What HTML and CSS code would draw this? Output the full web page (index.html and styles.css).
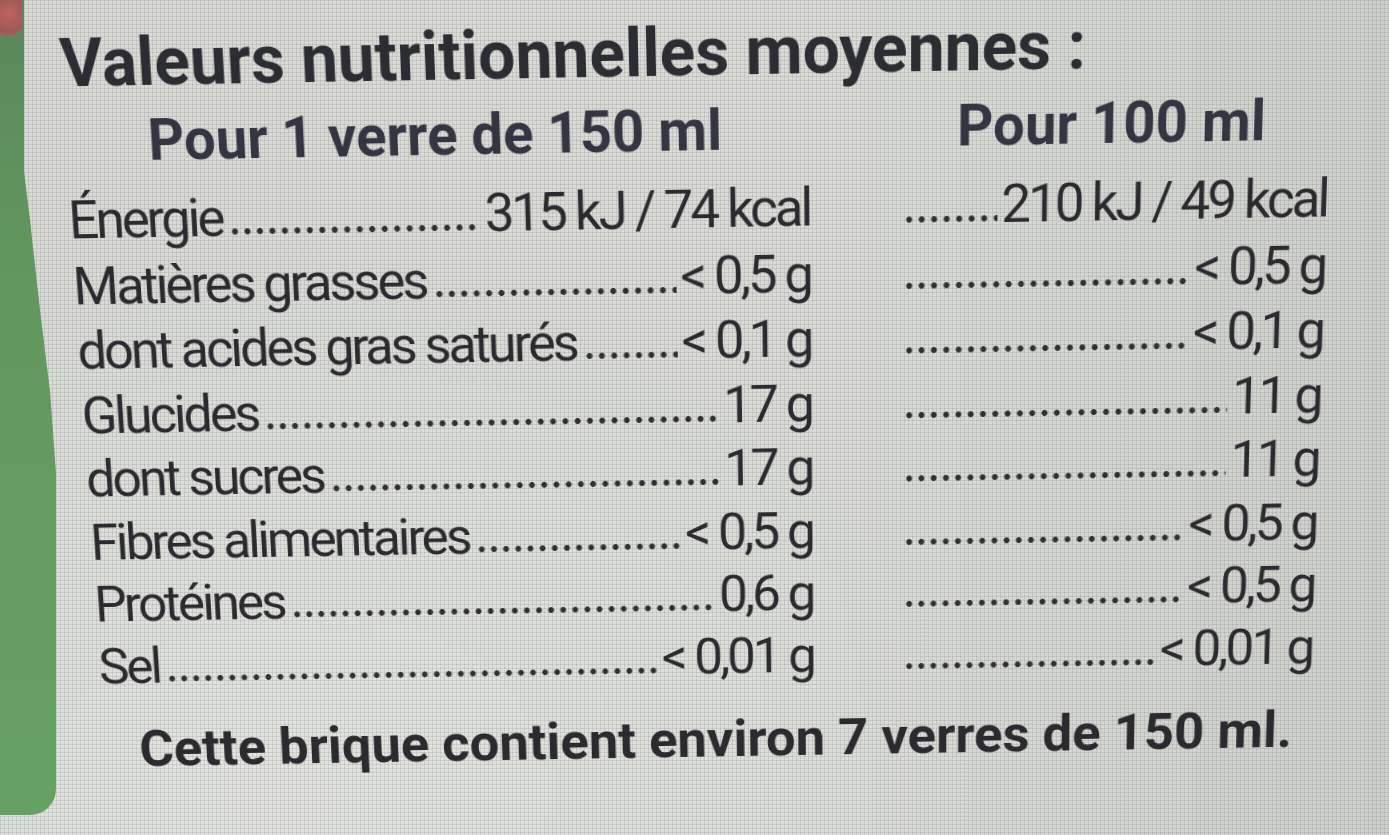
FILE: index.html
```html
<!DOCTYPE html>
<html lang="fr">
<head>
<meta charset="utf-8">
<title>Valeurs nutritionnelles moyennes</title>
<link rel="stylesheet" href="styles.css">
</head>
<body>
<div class="page">
  <div class="strip"><span class="blot"></span></div>
  <div class="label">
    <h1 class="title">Valeurs nutritionnelles moyennes :</h1>
    <div class="heads">
      <div class="head head-a">Pour 1 verre de 150 ml</div>
      <div class="head head-b">Pour 100 ml</div>
    </div>
    <div class="rows">
      <div class="row">
        <div class="cell"><span class="name">Énergie</span><span class="dots"></span><span class="val">315 kJ / 74 kcal</span></div>
        <div class="cell"><span class="dots"></span><span class="val">210 kJ / 49 kcal</span></div>
      </div>
      <div class="row">
        <div class="cell"><span class="name">Matières grasses</span><span class="dots"></span><span class="val">&lt; 0,5 g</span></div>
        <div class="cell"><span class="dots"></span><span class="val">&lt; 0,5 g</span></div>
      </div>
      <div class="row">
        <div class="cell"><span class="name">dont acides gras saturés</span><span class="dots"></span><span class="val">&lt; 0,1 g</span></div>
        <div class="cell"><span class="dots"></span><span class="val">&lt; 0,1 g</span></div>
      </div>
      <div class="row">
        <div class="cell"><span class="name">Glucides</span><span class="dots"></span><span class="val">17 g</span></div>
        <div class="cell"><span class="dots"></span><span class="val">11 g</span></div>
      </div>
      <div class="row">
        <div class="cell"><span class="name">dont sucres</span><span class="dots"></span><span class="val">17 g</span></div>
        <div class="cell"><span class="dots"></span><span class="val">11 g</span></div>
      </div>
      <div class="row">
        <div class="cell"><span class="name">Fibres alimentaires</span><span class="dots"></span><span class="val">&lt; 0,5 g</span></div>
        <div class="cell"><span class="dots"></span><span class="val">&lt; 0,5 g</span></div>
      </div>
      <div class="row">
        <div class="cell"><span class="name">Protéines</span><span class="dots"></span><span class="val">0,6 g</span></div>
        <div class="cell"><span class="dots"></span><span class="val">&lt; 0,5 g</span></div>
      </div>
      <div class="row">
        <div class="cell"><span class="name">Sel</span><span class="dots"></span><span class="val">&lt; 0,01 g</span></div>
        <div class="cell"><span class="dots"></span><span class="val">&lt; 0,01 g</span></div>
      </div>
    </div>
    <p class="note">Cette brique contient environ 7 verres de 150 ml.</p>
  </div>
</div>
</body>
</html>
```
FILE: styles.css
```css
* { box-sizing: border-box; }
html, body { margin: 0; padding: 0; }
body {
  width: 1389px;
  height: 835px;
  overflow: hidden;
  background-color: #d5d7d2;
  font-family: Roboto, "Liberation Sans", sans-serif;
  color: #2a2a2f;
}
.page {
  display: flex;
  width: 1389px;
  height: 835px;
  background-image:
    linear-gradient(90deg, rgba(70,72,70,0.12) 1px, transparent 1px),
    linear-gradient(rgba(70,72,70,0.12) 1px, transparent 1px),
    radial-gradient(ellipse at 20% 95%, rgba(232,234,230,0.6), transparent 45%),
    linear-gradient(90deg, #d8dad5 0%, #d9dbd6 60%, #cdd0cb 100%);
  background-size: 4px 4px, 4px 4px, 100% 100%, 100% 100%;
}
.strip {
  position: relative;
  flex: 0 0 56px;
  height: 815px;
  background: linear-gradient(180deg, #5a875b 0%, #62985f 35%, #67a064 100%);
  border-radius: 0 0 26px 0;
  clip-path: polygon(0 0, 24px 0, 24px 21%, 30px 27%, 40px 38%, 50px 48%, 56px 58%, 56px 100%, 0 100%);
}
.blot {
  position: absolute;
  left: 0;
  top: 0;
  width: 22px;
  height: 36px;
  border-radius: 0 0 12px 0;
  background: radial-gradient(circle at 40% 40%, #c0625f, #9c5a55 70%, #8b7a6e);
}
.label {
  flex: 1;
  padding: 29px 0 0 26px;
  transform: perspective(1500px) rotateX(-7deg) rotate(-1deg);
  transform-origin: 639px 417px;
}
.title {
  margin: 0 0 0 2px;
  font-size: 64px;
  line-height: 64px;
  font-weight: 700;
  color: #2c2c33;
  white-space: nowrap;
}
.heads {
  display: grid;
  grid-template-columns: 730px 417px;
  column-gap: 91px;
  margin-top: 15px;
}
.head {
  font-size: 55px;
  line-height: 55px;
  font-weight: 700;
  color: #343442;
  white-space: nowrap;
}
.head-a { padding-left: 83px; }
.head-b { padding-left: 53px; }
.rows {
  margin-top: 17px;
}
.row {
  display: grid;
  grid-template-columns: 730px 417px;
  column-gap: 91px;
  height: 64.5px;
}
.cell {
  display: flex;
  align-items: baseline;
  font-size: 52px;
  line-height: 64.5px;
  letter-spacing: -3px;
  white-space: nowrap;
}
.name { margin-right: 6px; }
.dots {
  flex: 1;
  height: 8px;
  margin-right: 4px;
  background-image: radial-gradient(circle, #2f2f33 2.6px, transparent 3.3px);
  background-size: 12.3px 8px;
  background-repeat: repeat-x;
  background-position: left bottom;
}
.val { letter-spacing: -3px; }
.note {
  margin: 28px 0 0 36px;
  font-size: 54px;
  line-height: 54px;
  font-weight: 700;
  letter-spacing: 0;
  color: #2a2a2f;
  white-space: nowrap;
}
```
